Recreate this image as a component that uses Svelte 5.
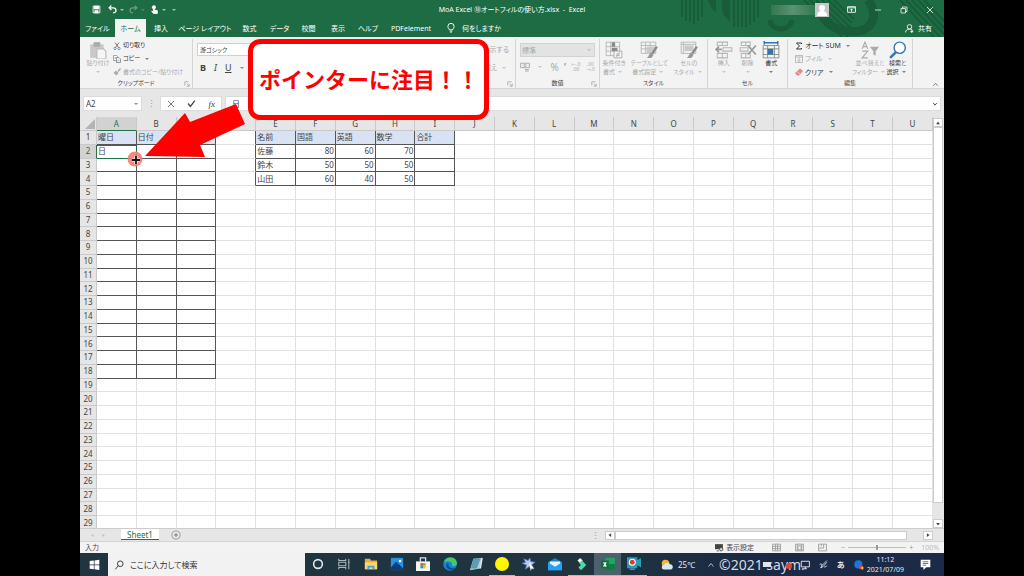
<script>
  const columns = 'ABCDEFGHIJKLMNOPQRSTU'.split('');
  const rows = Array.from({ length: 29 }, (_, i) => i + 1);

  const cells = {
    A1: '曜日', B1: '日付', A2: '日',
    E1: '名前', F1: '国語', G1: '英語', H1: '数学', I1: '合計',
    E2: '佐藤', F2: 80, G2: 60, H2: 70,
    E3: '鈴木', F3: 50, G3: 50, H3: 50,
    E4: '山田', F4: 60, G4: 40, H4: 50
  };

  const tabs = ['ファイル', 'ホーム', '挿入', 'ページ レイアウト', '数式', 'データ', '校閲', '表示', 'ヘルプ', 'PDFelement'];
  const apps = ['cortana', 'taskview', 'folder', 'photos', 'store', 'edge', 'notepad', 'yellow', 'bird', 'mail', 'filmora', 'excel', 'recorder'];
  const running = ['yellow', 'filmora', 'excel', 'recorder'];

  let formula = $state('日');
  let search = $state('');

  function inTable(col, row) {
    return (col >= 0 && col <= 2 && row <= 18) || (col >= 4 && col <= 8 && row <= 4);
  }

  function cellClass(col, row) {
    const list = [];
    if (inTable(col, row)) {
      list.push('boxed');
      if (row === 1) list.push('head');
    }
    if (col === 3 && row <= 4) list.push('before');
    if (typeof cells[columns[col] + row] === 'number') list.push('num');
    if (col === 0 && row === 2) list.push('active');
    return list.join(' ');
  }
</script>

{#snippet icon(name, size = 10)}
  <svg class="icon" width={size} height={size} viewBox="0 0 16 16" fill="none" stroke="currentColor" stroke-width="1.5" aria-hidden="true">
    {#if name === 'save'}
      <path d="M2 2h12v12H2z" /><path d="M4 2h8v5H4zM5 10h6v4H5z" fill="currentColor" />
    {:else if name === 'undo'}
      <path d="M6 1 2 5l4 4M2 5h7c7 0 7 9 0 9" stroke-width="2.2" />
    {:else if name === 'redo'}
      <path d="m10 1 4 4-4 4M14 5H7c-7 0-7 9 0 9" stroke-width="2" />
    {:else if name === 'touch'}
      <circle cx="7" cy="4" r="3.5" fill="currentColor" stroke="none" /><path d="M6 4h2v5l5 1v5H6l-3-4 3 1z" fill="currentColor" />
    {:else if name === 'bulb'}
      <path d="M5.500 11C5 9 3 8 3 5.500a5 5 0 0 1 10 0C13 8 11 9 10.500 11zM6 13h4M7 15h2" />
    {:else if name === 'person'}
      <circle cx="8" cy="5" r="4" /><path d="M1 15c0-4 3-6 7-6s5 2 6 3M12 11v5M9.500 13.500h5" />
    {:else if name === 'display'}
      <path d="M1 3h14v10H1zM1 5h14M8 12V7M5.500 9.500 8 7l2.500 2.500" />
    {:else if name === 'min'}
      <path d="M2 8h12" />
    {:else if name === 'restore'}
      <path d="M2 5h9v9H2zM5 5V2h9v9h-3" />
    {:else if name === 'close'}
      <path d="m2 2 12 12M14 2 2 14" />
    {:else if name === 'check'}
      <path d="m2 8 4 5 8-10" stroke-width="2.4" />
    {:else if name === 'down'}
      <path d="m3 5 5 6 5-6" stroke-width="2.4" />
    {:else if name === 'up'}
      <path d="m3 11 5-6 5 6" />
    {:else if name === 'left-tri'}
      <path d="M11 3v10L4 8z" fill="currentColor" stroke="none" />
    {:else if name === 'right-tri'}
      <path d="M5 3v10l7-5z" fill="currentColor" stroke="none" />
    {:else if name === 'up-tri'}
      <path d="M3 11h10L8 4z" fill="currentColor" stroke="none" />
    {:else if name === 'down-tri'}
      <path d="M3 5h10l-5 7z" fill="currentColor" stroke="none" />
    {:else if name === 'launcher'}
      <path d="M2 12V2h10M7 7l6 6M14 7v7H7" />
    {:else if name === 'paste'}
      <path d="M1 3h12v12H1z" fill="#c8c8c8" stroke="none" /><path d="M4 1h6v4H4z" fill="#aaa" stroke="none" /><path d="M7 7h6l2 2v7H7z" fill="#f6f6f6" stroke="#bbb" stroke-width="1" />
    {:else if name === 'cut'}
      <path d="m4 1 7 10M12 1 5 11" stroke="#555" /><circle cx="4" cy="13" r="2.300" stroke="#3f7fc0" /><circle cx="12" cy="13" r="2.300" stroke="#3f7fc0" />
    {:else if name === 'copy'}
      <path d="M1 1h6l2 2v8H1z" fill="#fff" stroke="#888" /><path d="M7 5h5l3 3v7H7z" fill="#fff" stroke="#777" /><path d="M9 10h4M9 12h4M3 5h3M3 7h3" stroke="#5d8fc4" stroke-width="1" />
    {:else if name === 'brush'}
      <path d="m15 1-5 6" stroke-width="3" /><path d="m6 5 5 5-4 5-6-5z" fill="currentColor" stroke="none" />
    {:else if name === 'money'}
      <path d="M1 2h14v7H1z" /><circle cx="8" cy="5.500" r="2" /><path d="M8 12h6M8 14.500h6" />
    {:else if name === 'cond'}
      <path d="M1 1h12v12H1zM1 5h12M1 9h12M5 1v12" stroke-width=".8" stroke="#b5b5b5" /><path d="M6 1h3v4H6zM6 6h5v3H6z" fill="#888" stroke="none" /><path d="M8 9h7v6H8z" fill="#f5f5f5" stroke="#aaa" stroke-width=".8" /><path d="m10 14 3-4M10 11.500h3M10 13h3" stroke-width=".8" />
    {:else if name === 'tablestyle'}
      <path d="M1 1h13v10H1zM1 4h13M1 7h13M5 1v10M9 1v10" stroke-width=".8" stroke="#b5b5b5" /><path d="M6 5h8v6H6z" fill="#c9c9c9" stroke="none" /><path d="m15 5-4 6" stroke="#888" stroke-width="2" /><path d="m10 10 2 2c-1 4-4 3-6 3 2-1 2-4 4-5z" fill="#999" stroke="none" />
    {:else if name === 'cellstyle'}
      <path d="M1 1h13v10H1zM1 3h13M3 1v10" stroke-width=".8" stroke="#b5b5b5" /><path d="M4 4h8v5H4z" fill="#c9c9c9" stroke="none" /><path d="m15 5-4 6" stroke="#888" stroke-width="2" /><path d="m10 10 2 2c-1 4-4 3-6 3 2-1 2-4 4-5z" fill="#999" stroke="none" />
    {:else if name === 'insert'}
      <path d="M2 1h9v3H2zM6.500 1v3M2 11h9v4H2zM6.500 11v4M7 6h8v3H7z" stroke="#b5b5b5" stroke-width=".9" /><path d="M6 7.500H1M3.500 5 1 7.500 3.500 10" stroke="#999" />
    {:else if name === 'delete'}
      <path d="M2 1h8v3H2zM6 1v3M2 11h8v4H2zM6 11v4M1 6h7v3H1z" stroke="#b5b5b5" stroke-width=".9" /><path d="m8 4 7 8M15 4l-7 8" stroke="#999" />
    {:else if name === 'format'}
      <path d="M2 1.500h12M2 0v3M14 0v3" stroke="#2f75b5" stroke-width="1.300" /><path d="M1 4h14v11H1zM1 7h14M1 12h14M5 4v11M11 4v11" stroke="#888" stroke-width=".8" /><path d="M5 7h5v5H5z" fill="#2f75b5" stroke="none" />
    {:else if name === 'sum'}
      <path d="M13 4V2H3l6 6-6 6h10v-2" stroke="#333" stroke-width="2" />
    {:else if name === 'fill'}
      <path d="M1 1h14v14H1zM1 4h14M8 5v8M5 10l3 3 3-3" />
    {:else if name === 'eraser'}
      <path d="m10 1 6 5-8 9H4l-4-5z" fill="#e8868d" stroke="none" /><path d="m4 7 6 5" stroke="#fff" stroke-width="1" />
    {:else if name === 'sort'}
      <path d="m1 7 2.500-6L6 7M2 5h3M1 9h5l-5 6h5" stroke-width="1" /><path d="M8 5h8l-3 4v4l-2-1V9z" fill="currentColor" stroke="none" />
    {:else if name === 'find'}
      <circle cx="9.500" cy="6" r="5" fill="#fff" stroke="#3b76b3" stroke-width="1.300" /><path d="m6 10-5 5" stroke="#3b76b3" stroke-width="2.200" />
    {:else if name === 'plus'}
      <circle cx="8" cy="8" r="6.500" stroke-width="1" /><path d="M8 5v6M5 8h6" />
    {:else if name === 'normal'}
      <path d="M1 2h14v12H1zM1 6h14M1 10h14M6 2v12M10 2v12" />
    {:else if name === 'layout'}
      <path d="M1 2h14v12H1zM4 2v12M12 2v12M5 5h6v7H5z" />
    {:else if name === 'break'}
      <path d="M1 14V2h14v12zM1 9h9V2M6 2v4" />
    {:else if name === 'screen'}
      <path d="M0 2h14v9H0z" fill="currentColor" stroke="none" /><path d="M3 14h4" /><circle cx="11" cy="11" r="3" fill="#ddd" />
    {:else if name === 'search'}
      <circle cx="10" cy="6" r="4.500" /><path d="m7 9-5 6" />
    {:else if name === 'windows'}
      <path d="m1 3 6-1v6H1zM8 2l7-1v7H8zM1 9h6v6l-6-1zM8 9h7v7l-7-1z" fill="#fff" stroke="none" />
    {:else if name === 'cortana'}
      <circle cx="8" cy="8" r="5" stroke="#e3e8ec" stroke-width="1.800" />
    {:else if name === 'taskview'}
      <path d="M2 2v2h8V2M2 14v-2h8v2M2 6h8v4H2zM13.500 2v12M12.500 6h2" stroke="#aab4ba" stroke-width="1.200" />
    {:else if name === 'folder'}
      <path d="M1 2h6l1 2h7v10H1z" fill="#e9a93b" stroke="none" /><path d="M1 6h14v8H1z" fill="#f8d775" stroke="none" /><path d="M4 14v-4h8v4h-2v-2H6v2z" fill="#4b9bd4" stroke="none" />
    {:else if name === 'photos'}
      <path d="M1 1h14v14H1z" fill="#2493e6" stroke="none" /><path d="m1 12 6-7 8 8v2H1z" fill="#0b3c7c" stroke="none" /><circle cx="11.500" cy="4.500" r="1.500" fill="#fff" stroke="none" />
    {:else if name === 'store'}
      <path d="M5 5V1h6v4" stroke="#ddd" /><path d="M0 5h16v11H0z" fill="#f6f6f6" stroke="none" /><path d="M5 7h3v3H5z" fill="#e94f32" stroke="none" /><path d="M8 7h3v3H8z" fill="#76b82a" stroke="none" /><path d="M5 10h3v3H5z" fill="#2496df" stroke="none" /><path d="M8 10h3v3H8z" fill="#f6b922" stroke="none" />
    {:else if name === 'edge'}
      <circle cx="8" cy="8" r="7.800" fill="#1684cf" stroke="none" /><path d="M1 6C3-2 16-1 16 7c0 3-3 4-6 3 2-3-2-7-9-4z" fill="#4cc66d" stroke="none" /><path d="M6 7c0 5 4 7 9 5-3 5-13 3-11-4z" fill="#0c4f94" stroke="none" />
    {:else if name === 'notepad'}
      <path d="m5 2 10-1-2 12-12 2z" fill="#a9d2dc" stroke="none" /><path d="m5 2 8 0-4 11H2z" fill="#5b9eaf" stroke="none" /><path d="m13 13 2-12" stroke="#e4eef0" />
    {:else if name === 'yellow'}
      <circle cx="8" cy="8" r="8" fill="#fff600" stroke="none" />
    {:else if name === 'bird'}
      <path d="m2 2 5 2 2-3 1 4 5 1-4 3 2 5-5-3-4 3 1-5-5-2 4-1z" fill="#b8cbed" stroke="#5773b8" stroke-width=".8" /><path d="m8 6 6 7-3 0-1 3z" fill="#fff" stroke="none" />
    {:else if name === 'mail'}
      <path d="m0 6 8-5 8 5v9H0z" fill="#1683d8" stroke="none" /><path d="M2 5h12v4l-6 3-6-3z" fill="#e8f5ff" stroke="none" /><path d="m0 6 8 5 8-5v9H0z" fill="#22a2f2" stroke="none" />
    {:else if name === 'filmora'}
      <path d="M0 0h16v16H0z" fill="#273237" stroke="none" /><path d="m4 4 3-3 3 3-3 3z" fill="#eafff8" stroke="none" /><path d="m9 4 5 5-6 6-3-3 3-3-2-2z" fill="#45dbb1" stroke="none" />
    {:else if name === 'excel'}
      <path d="M5 1h11v14H5z" fill="#21a366" stroke="none" /><path d="M10 8h6v7H5v-3z" fill="#107c41" stroke="none" /><path d="M0 4h9v9H0z" fill="#0f703b" stroke="none" /><path d="m3 6 3 5M6 6l-3 5" stroke="#fff" />
    {:else if name === 'recorder'}
      <path d="M0 1h11v11H0zM11 5l5-3v9l-5-3zM3 14h6" fill="#299bb9" stroke="#299bb9" /><circle cx="6" cy="6" r="4" fill="#fff" stroke="none" /><circle cx="6" cy="6" r="2.800" fill="#e5392f" stroke="none" />
    {:else if name === 'weather'}
      <circle cx="6" cy="6" r="5" fill="#f2b632" stroke="none" /><path d="M4 14a3 3 0 0 1 0-6c1-4 7-4 8-1 5 0 5 7 0 7z" fill="#d5e8f6" stroke="none" />
    {:else if name === 'monitor'}
      <path d="M2 2h13v9H2zM6 14h5M8.500 11v3" />
    {:else if name === 'pen'}
      <path d="m14 1-9 9-2 4 4-2 7-8M1 9c3-5 6 0 3 2M9 13c2-2 4 0 5-3" />
    {:else if name === 'ball'}
      <circle cx="7" cy="7" r="6.500" fill="#1d74df" stroke="none" /><path d="m9 8 6 2-2 5-5-1z" fill="#e8462f" stroke="none" /><path d="M12 11h3v4h-3z" fill="#f3c93b" stroke="none" />
    {:else if name === 'note'}
      <path d="M1 1h14v11H9l-4 4v-4H1z" fill="#fff" stroke="none" /><path d="M4 4h8M4 6.500h8M4 9h5" stroke="#25364e" stroke-width="1" />
    {/if}
  </svg>
{/snippet}

{#snippet big(name, line1, line2 = '', on = false)}
  <button class="big" class:on>
    {@render icon(name, 18)}
    <span>{line1}</span>
    <span>{line2}<i class="caret"></i></span>
  </button>
{/snippet}

<div class="screen">
  <div class="desktop">
    <header class="green">
      <svg class="pattern" viewBox="0 0 264 37" preserveAspectRatio="xMaxYMin slice" fill="none" stroke="#185c39" aria-hidden="true">
        <path d="M2 0v17M6 0v21M10 0v22M14 0v24M18 0v21M22 0v17" stroke-width="2" />
        <path d="M28 0q3 9 8 13V0z" fill="#185c39" stroke="none" />
        <path d="M42 0q-2 14 8 22V0z" fill="#185c39" stroke="none" />
        <path d="M54 0v27M58 0v27M62 0v27M66 0v27M70 0v25M74 0v22M78 0v17" stroke-width="2" />
        <path d="M90 20c2 12 20 12 22 0" stroke-width="5" />
        <path d="m124 0 38 37M130 0l38 37M136 0l34 33M142 0l28 27M148 0l24 23M154 0l20 19" stroke-width="2" />
        <path d="M188 0c14 20 0 34-20 31-14-1-24-9-28-20" stroke-width="9" />
        <path d="m220 0 34 37M226 0l34 37M232 0l32 34M238 0l26 28M244 0l20 21" stroke-width="2" />
      </svg>
      <div class="titlebar">
        <div class="quick">
          <button class="save" aria-label="上書き保存">{@render icon('save', 9)}</button>
          <button aria-label="元に戻す">{@render icon('undo', 9)}<i class="caret"></i></button>
          <button class="faded" aria-label="やり直し">{@render icon('redo', 9)}<i class="caret"></i></button>
          <button aria-label="タッチ">{@render icon('touch', 9)}<i class="caret"></i></button>
          <button aria-label="カスタマイズ"><i class="caret"></i></button>
        </div>
        <div class="title">MoA Excel ⑱オートフィルの使い方.xlsx &nbsp;-&nbsp; Excel</div>
        <div class="window-tools">
          <span class="account"></span>
          <svg class="avatar" viewBox="0 0 14 14" aria-hidden="true">
            <path d="M0 0h14v14H0z" fill="#c7c7c7" />
            <circle cx="7" cy="5" r="3" fill="#fff" />
            <path d="M2 13q0-5 5-5t5 5z" fill="#fff" />
          </svg>
          <button aria-label="リボンの表示">{@render icon('display', 9)}</button>
          <button aria-label="最小化">{@render icon('min', 8)}</button>
          <button aria-label="元のサイズ">{@render icon('restore', 8)}</button>
          <button aria-label="閉じる">{@render icon('close', 8)}</button>
        </div>
      </div>
      <nav class="tabs">
        {#each tabs as tab}
          <button class:selected={tab === 'ホーム'}>{tab}</button>
        {/each}
        <button class="tell">{@render icon('bulb', 10)} 何をしますか</button>
        <button class="share">{@render icon('person', 9)} 共有</button>
      </nav>
    </header>

    <section class="ribbon">
      <div class="group clipboard">
        <div class="tools">
          {@render big('paste', '貼り付け')}
          <div class="stack">
            <button class="on">{@render icon('cut', 8)} 切り取り</button>
            <button class="on">{@render icon('copy', 8)} コピー <i class="caret"></i></button>
            <button>{@render icon('brush', 8)} 書式のコピー/貼り付け</button>
          </div>
        </div>
        <footer>クリップボード<span class="launcher">{@render icon('launcher', 6)}</span></footer>
      </div>
      <div class="group font">
        <div class="font-tools">
          <input aria-label="フォント" value="游ゴシック" />
          <div class="letters">
            <button><b>B</b></button>
            <button><em>I</em></button>
            <button><u>U</u></button>
            <i class="caret"></i>
          </div>
        </div>
        <div class="align-tools">
          <button>示する</button>
          <button>揃え <i class="caret"></i></button>
        </div>
        <footer><span class="launcher">{@render icon('launcher', 6)}</span></footer>
      </div>
      <div class="group number">
        <div class="number-tools">
          <div class="drop">
            <select aria-label="表示形式" disabled><option>標準</option></select>
            <i class="caret"></i>
          </div>
          <div class="formats">
            <button aria-label="通貨">{@render icon('money', 10)}</button>
            <i class="caret"></i>
            <button>%</button>
            <button><b>’</b></button>
            <button class="decimal">←.0<br />.00</button>
            <button class="decimal">.00<br />→.0</button>
          </div>
        </div>
        <footer>数値<span class="launcher">{@render icon('launcher', 6)}</span></footer>
      </div>
      <div class="group styles">
        <div class="tools">
          {@render big('cond', '条件付き', '書式')}
          {@render big('tablestyle', 'テーブルとして', '書式設定')}
          {@render big('cellstyle', 'セルの', 'スタイル')}
        </div>
        <footer>スタイル</footer>
      </div>
      <div class="group cells">
        <div class="tools">
          {@render big('insert', '挿入')}
          {@render big('delete', '削除')}
          {@render big('format', '書式', '', true)}
        </div>
        <footer>セル</footer>
      </div>
      <div class="group edit">
        <div class="tools">
          <div class="stack">
            <button class="on">{@render icon('sum', 8)} オート SUM <i class="caret"></i></button>
            <button>{@render icon('fill', 8)} フィル <i class="caret"></i></button>
            <button class="on">{@render icon('eraser', 8)} クリア <i class="caret"></i></button>
          </div>
          {@render big('sort', '並べ替えと', 'フィルター')}
          {@render big('find', '検索と', '選択', true)}
        </div>
        <footer>編集</footer>
      </div>
      <button class="collapse" aria-label="リボンを折りたたむ">{@render icon('up', 7)}</button>
    </section>

    <section class="formula">
      <div class="namebox"><input aria-label="名前ボックス" value="A2" /><i class="caret"></i></div>
      <span class="dots">⋮</span>
      <div class="entry">
        <button aria-label="キャンセル">{@render icon('close', 8)}</button>
        <button aria-label="入力">{@render icon('check', 9)}</button>
        <button class="fx">fx</button>
      </div>
      <div class="bar"><input aria-label="数式バー" bind:value={formula} />{@render icon('down', 6)}</div>
    </section>

    <main>
      <div class="sheet">
        <table>
          <thead>
            <tr>
              <th class="corner" aria-label="すべて選択">
                <svg viewBox="0 0 10 10" width="10" height="10" aria-hidden="true"><path d="M10 0v10H0z" fill="#b4b4b4" /></svg>
              </th>
              {#each columns as column}
                <th class:current={column === 'A'}>{column}</th>
              {/each}
            </tr>
          </thead>
          <tbody>
            {#each rows as row}
              <tr>
                <th class:current={row === 2}>{row}</th>
                {#each columns as column, c}
                  <td class={cellClass(c, row)}>{cells[column + row] ?? ''}</td>
                {/each}
              </tr>
            {/each}
          </tbody>
        </table>
      </div>
      <div class="vscroll">
        <button aria-label="上へ">{@render icon('up-tri', 6)}</button>
        <span class="thumb"></span>
        <button aria-label="下へ">{@render icon('down-tri', 6)}</button>
      </div>
    </main>

    <div class="sheetbar">
      <div class="pager">{@render icon('left-tri', 5)}{@render icon('right-tri', 5)}</div>
      <button class="sheet-tab">Sheet1</button>
      <button class="add" aria-label="新しいシート">{@render icon('plus', 10)}</button>
      <span class="dots">⋮</span>
      <div class="hscroll">
        <button aria-label="左へ">{@render icon('left-tri', 6)}</button>
        <span class="thumb"></span>
        <button aria-label="右へ">{@render icon('right-tri', 6)}</button>
      </div>
    </div>

    <div class="status">
      <span>入力</span>
      <div class="views">
        <button class="settings">{@render icon('screen', 9)} 表示設定</button>
        <button aria-label="標準">{@render icon('normal', 9)}</button>
        <button aria-label="ページ レイアウト">{@render icon('layout', 9)}</button>
        <button aria-label="改ページ プレビュー">{@render icon('break', 9)}</button>
        <div class="zoom">
          <span>−</span><input type="range" aria-label="ズーム" min="0" max="100" value="50" /><span>+</span>
        </div>
        <span class="percent">100%</span>
      </div>
    </div>

    <footer class="taskbar">
      <button class="start" aria-label="スタート">{@render icon('windows', 11)}</button>
      <label class="search">{@render icon('search', 10)}<input bind:value={search} placeholder="ここに入力して検索" /></label>
      <div class="apps">
        {#each apps as app}
          <button class:running={running.includes(app)} class:front={app === 'excel'} aria-label={app}>{@render icon(app, 14)}</button>
        {/each}
      </div>
      <div class="weather">{@render icon('weather', 12)} 25℃</div>
      <div class="tray">
        {@render icon('up', 8)}
        <span class="credit">
          <svg viewBox="0 0 84 20" aria-hidden="true">
            <path d="M43 7h8v5h-8z" fill="#dfe5ea" />
            <circle cx="69" cy="11" r="3" fill="#e0463c" />
          </svg>
          ©2021 saym.
        </span>
        {@render icon('monitor', 10)}
        {@render icon('pen', 9)}
        <b>あ</b>
        {@render icon('ball', 10)}
      </div>
      <div class="clock"><span>11:12</span><span>2021/07/09</span></div>
      <button class="notice" aria-label="通知">{@render icon('note', 11)}</button>
    </footer>

    <svg class="pointer" viewBox="0 0 120 66" aria-hidden="true">
      <circle cx="8" cy="57" r="7.500" fill="#f47c74" fill-opacity=".9" />
      <path d="M9 54v8M5 58h8" stroke="#fff" stroke-width="3" />
      <path d="M9 54v8M5 58h8" stroke="#111" stroke-width="1.800" />
      <path d="m18 54 40-43 5 9 46-18 9 20-45 21 5 12z" fill="#fe0000" />
    </svg>
    <div class="callout">ポインターに注目！！</div>
  </div>
</div>

<style>
  :global(body) {
    margin: 0;
    background: #000;
  }

  * {
    box-sizing: border-box;
  }

  .screen {
    display: flex;
    justify-content: center;
    background: #000;
  }

  .desktop {
    position: relative;
    display: flex;
    flex-direction: column;
    height: 100vh;
    aspect-ratio: 3 / 2;
    overflow: hidden;
    background: #e6e6e6;
    color: #444;
    font: 7px/9px "Noto Sans", "Noto Sans CJK JP", sans-serif;
    font-feature-settings: "palt";
    white-space: nowrap;
  }

  button,
  input,
  select {
    margin: 0;
    padding: 0;
    border: 0;
    background: none;
    color: inherit;
    font: inherit;
    font-feature-settings: inherit;
    min-width: 0;
  }

  button {
    display: flex;
    align-items: center;
    justify-content: center;
    gap: 2px;
  }

  .icon {
    display: block;
    flex: none;
  }

  .caret {
    display: inline-block;
    flex: none;
    margin: 0 3px;
    border: 2px solid transparent;
    border-top-color: currentColor;
    border-bottom: 0;
    opacity: 0.6;
    vertical-align: middle;
  }

  /* title and tabs */
  .green {
    position: relative;
    background: #1e6c43;
    color: #fff;
  }

  .pattern {
    position: absolute;
    top: 0;
    right: 0;
    width: 264px;
    height: 37px;
  }

  .titlebar {
    position: relative;
    display: grid;
    grid-template-columns: 1fr auto 1fr;
    align-items: center;
    height: 19px;
  }

  .quick {
    display: flex;
    gap: 4px;
    padding-left: 12px;
  }

  .quick .caret {
    margin: 0 1px;
  }

  .quick .save {
    margin-right: 3px;
  }

  .faded {
    opacity: 0.35;
  }

  .window-tools {
    display: flex;
    align-items: center;
    justify-content: flex-end;
    gap: 18px;
    padding-right: 10px;
  }

  .account {
    width: 44px;
    height: 10px;
    margin-right: -18px;
    background: linear-gradient(90deg, #33784f, #5b9273, #33784f);
  }

  .avatar {
    width: 14px;
    height: 14px;
  }

  .tabs {
    position: relative;
    display: grid;
    grid-template-columns: 35px 31px 30px 58px 31px 29px 29px 30px 30px 56px auto 1fr;
    height: 18px;
  }

  .tabs .selected {
    background: #f3f3f3;
    color: #1e6c43;
  }

  .tabs .tell {
    gap: 6px;
    padding-left: 7px;
  }

  .tabs .share {
    gap: 4px;
    justify-content: flex-end;
    padding-right: 12px;
  }

  /* ribbon */
  .ribbon {
    display: flex;
    height: 52px;
    background: #f3f3f3;
    color: #aaa;
    border-bottom: 1px solid #d5d5d5;
    font-size: 6px;
  }

  .group {
    position: relative;
    display: flex;
    flex-wrap: wrap;
    align-content: space-between;
    flex: none;
    margin-top: 2px;
    border-right: 1px solid #d4d4d4;
  }

  .group footer {
    width: 100%;
    height: 9px;
    color: #444;
    text-align: center;
  }

  .launcher {
    position: absolute;
    right: 2px;
    bottom: 1px;
    color: #888;
  }

  .on {
    color: #333;
  }

  .tools {
    display: flex;
    width: 100%;
    height: 40px;
  }

  .stack {
    display: flex;
    flex-direction: column;
    justify-content: space-around;
  }

  .stack button {
    justify-content: flex-start;
    height: 13px;
  }

  .big {
    flex-direction: column;
    justify-content: flex-start;
    gap: 0;
    padding-top: 2px;
  }

  .clipboard {
    width: 113px;
  }

  .clipboard .big {
    width: 33px;
    padding-left: 3px;
  }

  .font {
    width: 323px;
    justify-content: space-between;
  }

  .font-tools {
    padding: 4px 0 0 4px;
  }

  .font-tools input {
    width: 130px;
    height: 13px;
    padding-left: 2px;
    border: 1px solid #d0d0d0;
    background: #fff;
    color: #444;
  }

  .letters {
    display: flex;
    align-items: center;
    gap: 8px;
    padding: 7px 3px 0;
    color: #444;
    font-size: 9px;
  }

  .letters .caret {
    margin: 0;
  }

  .align-tools {
    display: flex;
    flex-direction: column;
    gap: 9px;
    align-items: flex-end;
    padding: 6px 6px 0 0;
    font-size: 7px;
  }

  .number {
    width: 84px;
  }

  .number-tools {
    width: 100%;
    padding: 4px 4px 0;
  }

  .drop {
    display: flex;
    align-items: center;
    height: 14px;
    border: 1px solid #d2d2d2;
    background: #e3e3e3;
    font-size: 7px;
  }

  .drop select {
    flex: 1;
    appearance: none;
    padding-left: 1px;
    opacity: 1;
    color: #aaa;
  }

  .formats {
    display: flex;
    align-items: center;
    justify-content: space-between;
    height: 20px;
    font-size: 10px;
  }

  .formats .decimal {
    font-size: 5px;
    line-height: 5px;
  }

  .styles {
    width: 108px;
  }

  .styles .tools {
    justify-content: space-around;
  }

  .cells {
    width: 80px;
  }

  .cells .tools {
    padding: 0 4px;
  }

  .cells .big {
    flex: 1;
  }

  .edit {
    width: 125px;
  }

  .edit .tools {
    justify-content: space-between;
    padding: 0 4px 0 7px;
  }

  .edit .stack {
    font-size: 7px;
  }

  .collapse {
    align-self: flex-end;
    margin-left: auto;
    padding: 0 5px 0 0;
  }

  .collapse .icon {
    stroke: #555;
  }

  /* formula bar */
  .formula {
    display: flex;
    height: 15px;
    margin: 7px 3px 6px;
  }

  .namebox,
  .entry,
  .bar {
    display: flex;
    align-items: center;
    background: #fff;
    border: 1px solid #dcdcdc;
  }

  .namebox {
    width: 59px;
  }

  .namebox input {
    flex: 1;
    padding-left: 2px;
    font-size: 8px;
  }

  .dots {
    width: 18px;
    text-align: center;
    font-size: 9px;
    line-height: 15px;
    color: #999;
  }

  .entry {
    justify-content: space-around;
    width: 62px;
  }

  .fx {
    font: italic 9px "Liberation Serif", serif;
  }

  .bar {
    flex: 1;
    margin-left: 3px;
    padding-right: 2px;
  }

  .bar input {
    flex: 1;
    padding-left: 6px;
    font-size: 8px;
  }

  /* grid */
  main {
    display: flex;
    flex: 1;
    min-height: 0;
  }

  .sheet {
    flex: 1;
    overflow: hidden;
    background: #fff;
  }

  table {
    width: 100%;
    height: calc(100% + 2px);
    table-layout: fixed;
    border-collapse: separate;
    border-spacing: 0;
    font-size: 8px;
    line-height: 10px;
    font-feature-settings: normal;
  }

  th,
  td {
    padding: 0;
    border: 0 solid #e1e1e1;
    border-width: 0 1px 1px 0;
    font-weight: normal;
  }

  th {
    background: #e6e6e6;
    border-color: #c9c9c9;
    text-align: center;
  }

  thead th {
    height: 14px;
  }

  th.corner {
    width: 17px;
  }

  .corner svg {
    display: block;
    margin: 0 1px 0 auto;
  }

  th.current {
    background: #d2d2d2;
    color: #217346;
  }

  thead th.current {
    border-bottom-color: #217346;
  }

  tbody th.current {
    border-right-color: #217346;
  }

  td {
    padding-left: 1px;
  }

  td.boxed {
    border-color: #555;
  }

  td.before {
    border-right-color: #555;
  }

  td.head {
    background: #d9e2f2;
  }

  td.num {
    padding-right: 1px;
    text-align: right;
  }

  td.active {
    border-color: #217346;
    box-shadow: inset 0 1px #217346;
  }

  .vscroll {
    display: flex;
    flex-direction: column;
    width: 11px;
    padding: 1px 1px 0 0;
  }

  .vscroll button,
  .hscroll button {
    width: 10px;
    height: 9px;
    border: 1px solid #ccc;
    background: #fff;
  }

  .thumb {
    flex: 1;
    background: #fff;
    border: 1px solid #ccc;
  }

  .vscroll .thumb {
    margin-bottom: 16px;
  }

  /* bottom bars */
  .sheetbar {
    display: flex;
    align-items: center;
    height: 13px;
    border-top: 1px solid #ccc;
  }

  .pager {
    display: flex;
    gap: 6px;
    width: 41px;
    padding-left: 10px;
    color: #bbb;
  }

  .sheet-tab {
    align-self: flex-start;
    width: 38px;
    height: 11px;
    background: #fff;
    border-bottom: 1px solid #217346;
    color: #217346;
    font-size: 8px;
  }

  .add {
    margin-left: 12px;
    color: #777;
  }

  .sheetbar .dots {
    margin-left: auto;
  }

  .hscroll {
    display: flex;
    width: 38%;
    margin-right: 11px;
  }

  .hscroll .thumb {
    margin-right: 16px;
  }

  .status {
    display: flex;
    align-items: center;
    justify-content: space-between;
    height: 12px;
    padding: 0 5px;
    background: #f3f3f3;
    border-top: 1px solid #d4d4d4;
  }

  .views {
    display: flex;
    align-items: center;
    gap: 14px;
    color: #999;
  }

  .settings {
    margin-right: 4px;
    color: #444;
  }

  .zoom {
    display: flex;
    align-items: center;
    gap: 3px;
    margin-right: -6px;
  }

  .zoom input {
    appearance: none;
    width: 58px;
    height: 1px;
    background: #bbb;
  }

  .zoom input::-webkit-slider-thumb {
    appearance: none;
    width: 2px;
    height: 5px;
    background: #999;
  }

  .percent {
    color: #bbb;
  }

  /* taskbar */
  .taskbar {
    display: flex;
    height: 23px;
    background: linear-gradient(90deg, #1f353f 0, #20343f 60%, #1a2945 80%, #1b2a46);
    color: #e6e9ee;
  }

  .start {
    width: 28px;
  }

  .search {
    display: flex;
    align-items: center;
    gap: 6px;
    width: 197px;
    padding-left: 6px;
    background: #f2f2f2;
    color: #333;
  }

  .search input {
    flex: 1;
    font-size: 8px;
  }

  .search input::placeholder {
    color: #333;
    opacity: 1;
  }

  .apps {
    display: grid;
    grid-template-columns: repeat(13, 1fr);
    width: 342px;
  }

  .apps button {
    border-bottom: 1px solid transparent;
  }

  .apps .running {
    border-color: #8fc4e8;
  }

  .apps .front {
    background: #4b626c;
  }

  .weather {
    display: flex;
    align-items: center;
    gap: 5px;
    width: 60px;
    padding-left: 14px;
    font-size: 8px;
  }

  .tray {
    display: flex;
    align-items: center;
    gap: 9px;
  }

  .credit {
    position: relative;
    margin: 0 -14px 0 -5px;
    color: #d5dae0;
    font-size: 14px;
    line-height: 20px;
  }

  .credit svg {
    position: absolute;
    inset: 0;
    width: 100%;
    height: 100%;
  }

  .tray b {
    font-size: 8px;
  }

  .clock {
    display: flex;
    flex: 1;
    flex-direction: column;
    align-items: center;
    justify-content: center;
    line-height: 10px;
  }

  .notice {
    width: 37px;
  }

  /* annotation over the recording */
  .pointer {
    position: absolute;
    top: 102px;
    left: 47px;
    width: 120px;
    height: 66px;
  }

  .callout {
    position: absolute;
    top: 39px;
    left: 168px;
    display: flex;
    align-items: center;
    width: 241px;
    height: 81px;
    padding: 0 0 4px 6px;
    border: 5px solid #fe0000;
    border-radius: 12px;
    background: #fff;
    color: #fe0000;
    font: bold 22px/32px "Noto Sans CJK JP", sans-serif;
    font-feature-settings: normal;
  }
</style>
